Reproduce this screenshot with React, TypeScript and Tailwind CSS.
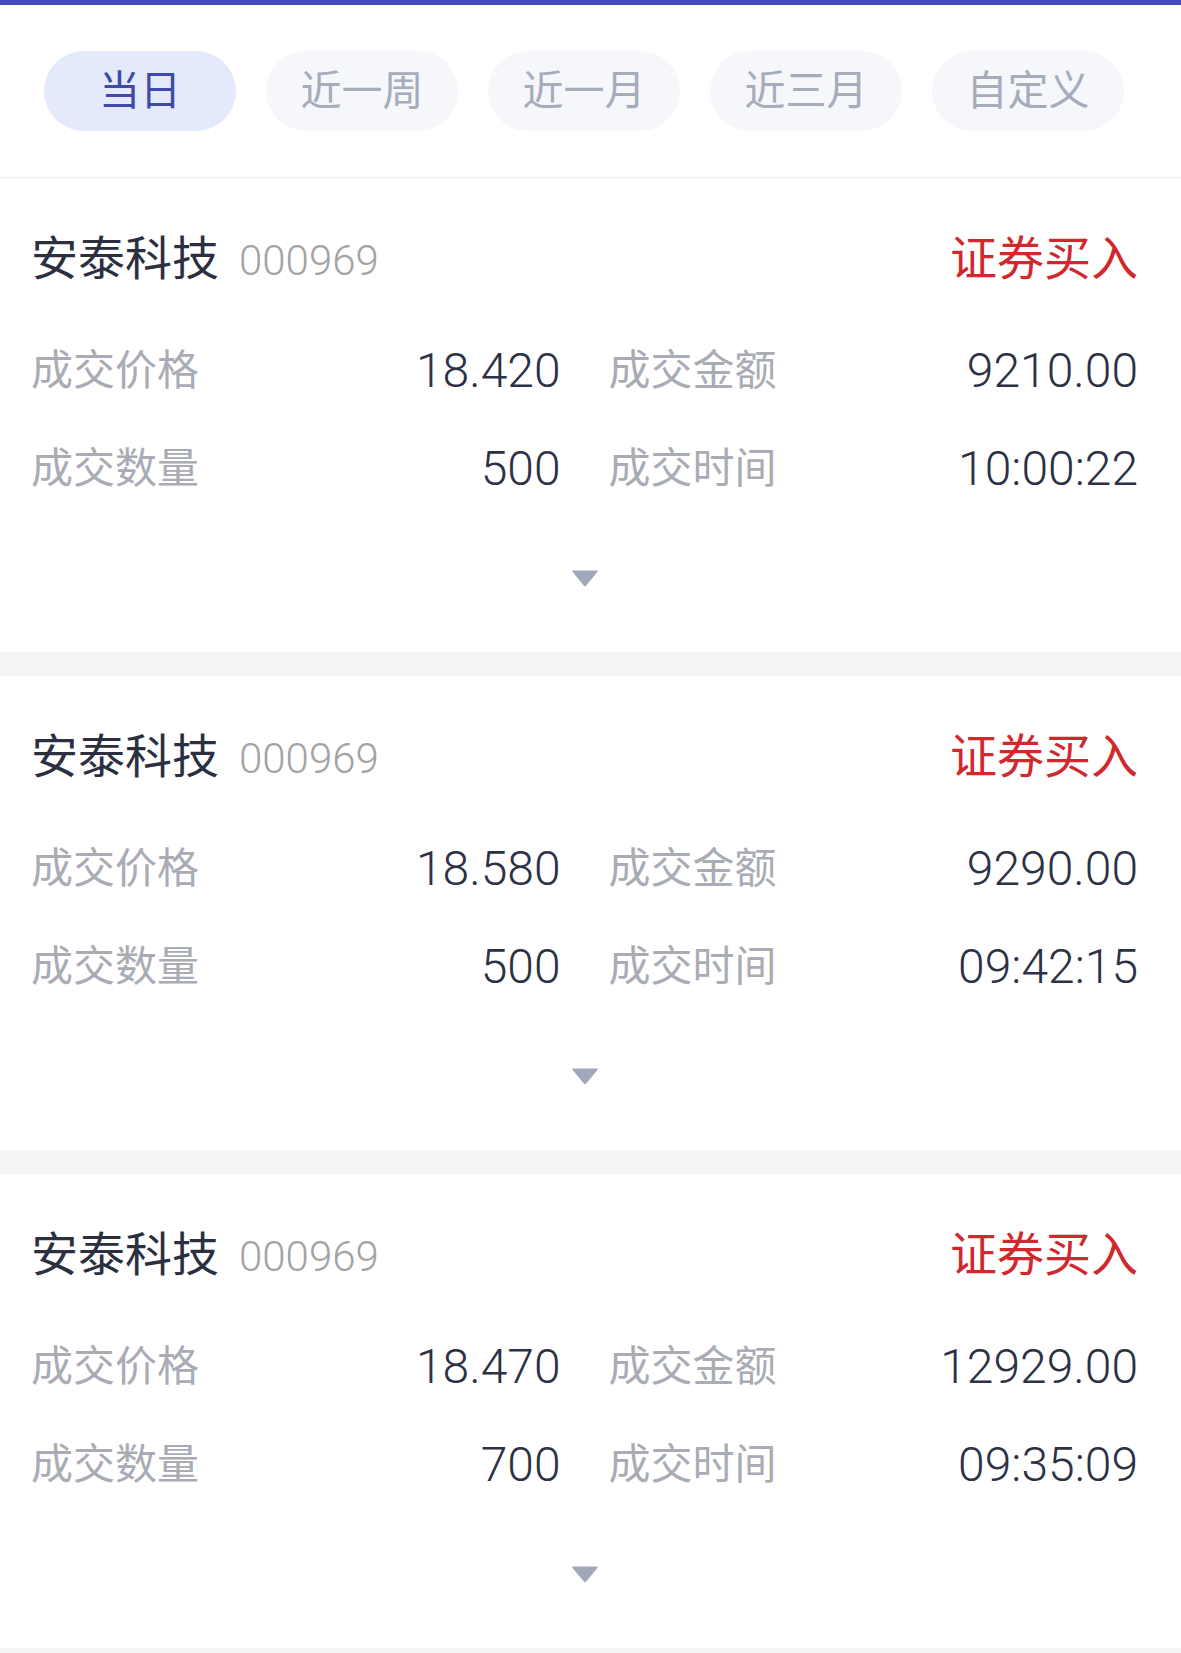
import React from "react";

type Trade = {
  name: string;
  code: string;
  side: string;
  price: string;
  amount: string;
  qty: string;
  time: string;
};

const trades: Trade[] = [
  { name: "安泰科技", code: "000969", side: "证券买入", price: "18.420", amount: "9210.00", qty: "500", time: "10:00:22" },
  { name: "安泰科技", code: "000969", side: "证券买入", price: "18.580", amount: "9290.00", qty: "500", time: "09:42:15" },
  { name: "安泰科技", code: "000969", side: "证券买入", price: "18.470", amount: "12929.00", qty: "700", time: "09:35:09" },
];

const tabs = ["当日", "近一周", "近一月", "近三月", "自定义"];

function Cell({ label, value }: { label: string; value: string }) {
  return (
    <div className="flex items-center justify-between h-[64px]">
      <span className="text-[42px] text-[#a9acb4] leading-none">{label}</span>
      <span className="text-[48px] font-light text-[#2c3145] leading-none">{value}</span>
    </div>
  );
}

function Card({ t }: { t: Trade }) {
  return (
    <div className="bg-white h-[474px] pl-[31px] pr-[43px] pt-[48px]">
      <div className="flex items-center justify-between h-[64px]">
        <div className="flex items-baseline">
          <span className="text-[47px] text-[#2b2f40] leading-none">{t.name}</span>
          <span className="text-[42px] font-light text-[#a3a3a3] leading-none ml-[20px]">{t.code}</span>
        </div>
        <span className="text-[47px] text-[#d1282d] leading-none">{t.side}</span>
      </div>
      <div className="grid grid-cols-2 gap-x-[48px] gap-y-[34px] mt-[49px]">
        <Cell label="成交价格" value={t.price} />
        <Cell label="成交金额" value={t.amount} />
        <Cell label="成交数量" value={t.qty} />
        <Cell label="成交时间" value={t.time} />
      </div>
      <div className="flex justify-center mt-[68px]">
        <svg width="28" height="18" viewBox="0 0 28 18">
          <path d="M2 1.5 H26 Q27.5 1.5 26.6 2.8 L15.2 16.6 Q14 18 12.8 16.6 L1.4 2.8 Q0.5 1.5 2 1.5 Z" fill="#a1a8b9" />
        </svg>
      </div>
    </div>
  );
}

export default function App() {
  return (
    <div
      className="w-[1181px] min-h-[1653px] bg-[#f4f5f7]"
      style={{ fontFamily: 'Roboto, "Noto Sans CJK SC", sans-serif' }}
    >
      <div className="h-[5px] bg-[#434cb8]" />
      <div className="bg-white flex gap-[30px] pl-[44px] pt-[46px] pb-[46px] border-b border-[#ebebeb]">
        {tabs.map((tab, i) => (
          <div
            key={tab}
            className={
              i === 0
                ? "w-[192px] h-[80px] rounded-full bg-[#e4e9fb] text-[#3f49a9] flex items-center justify-center text-[41px] leading-none"
                : "w-[192px] h-[80px] rounded-full bg-[#f5f7fa] text-[#a6acba] flex items-center justify-center text-[41px] leading-none"
            }
          >
            {tab}
          </div>
        ))}
      </div>
      <div className="flex flex-col gap-[24px]">
        {trades.map((t, i) => (
          <Card key={i} t={t} />
        ))}
      </div>
    </div>
  );
}
